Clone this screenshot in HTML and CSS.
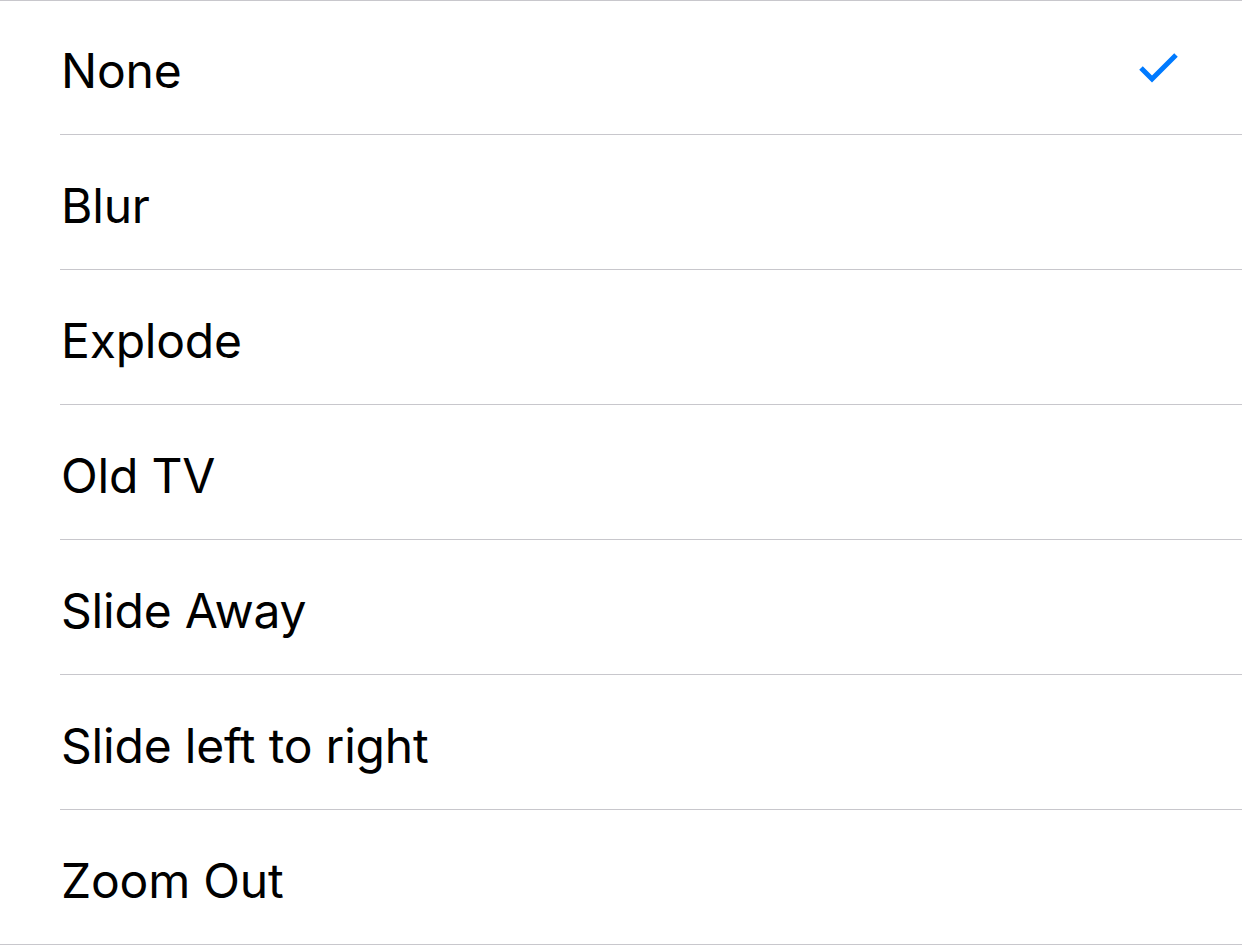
FILE: index.html
```html
<!DOCTYPE html>
<html lang="en">
  <head>
    <meta charset="UTF-8" />
    <meta name="viewport" content="width=device-width, initial-scale=1.0" />
    <title>Transition</title>
    <link rel="stylesheet" href="styles.css">
  </head>
  <body>
    <ul class="options">
      <li class="option selected">
        <span class="label">None</span>
        <svg class="check" width="42" height="32" viewBox="0 0 42 32">
          <path d="M3 16 L14 27 L38 3" fill="none" stroke="#007aff" stroke-width="5" />
        </svg>
      </li>
      <li class="option"><span class="label">Blur</span></li>
      <li class="option"><span class="label">Explode</span></li>
      <li class="option"><span class="label">Old TV</span></li>
      <li class="option"><span class="label">Slide Away</span></li>
      <li class="option"><span class="label">Slide left to right</span></li>
      <li class="option"><span class="label">Zoom Out</span></li>
    </ul>
  </body>
</html>
```

FILE: styles.css
```css
body {
  margin: 0;
  background-color: #ffffff;
  font-family: Inter, "Liberation Sans", Arial, sans-serif;
  color: #000000;
}
.options {
  list-style: none;
  margin: 0;
  padding: 0;
  border-top: 1px solid #c8c7cc;
  border-bottom: 1px solid #c8c7cc;
}
.option {
  height: 134px;
  margin-left: 60px;
  padding: 6px 62px 0 1px;
  box-sizing: border-box;
  display: flex;
  align-items: center;
  justify-content: space-between;
  font-size: 48px;
  letter-spacing: -0.2px;
}
.option:first-child {
  height: 133px;
}
.option + .option {
  border-top: 1px solid #c8c7cc;
  height: 135px;
}
.check {
  margin-top: -6px;
}
```
